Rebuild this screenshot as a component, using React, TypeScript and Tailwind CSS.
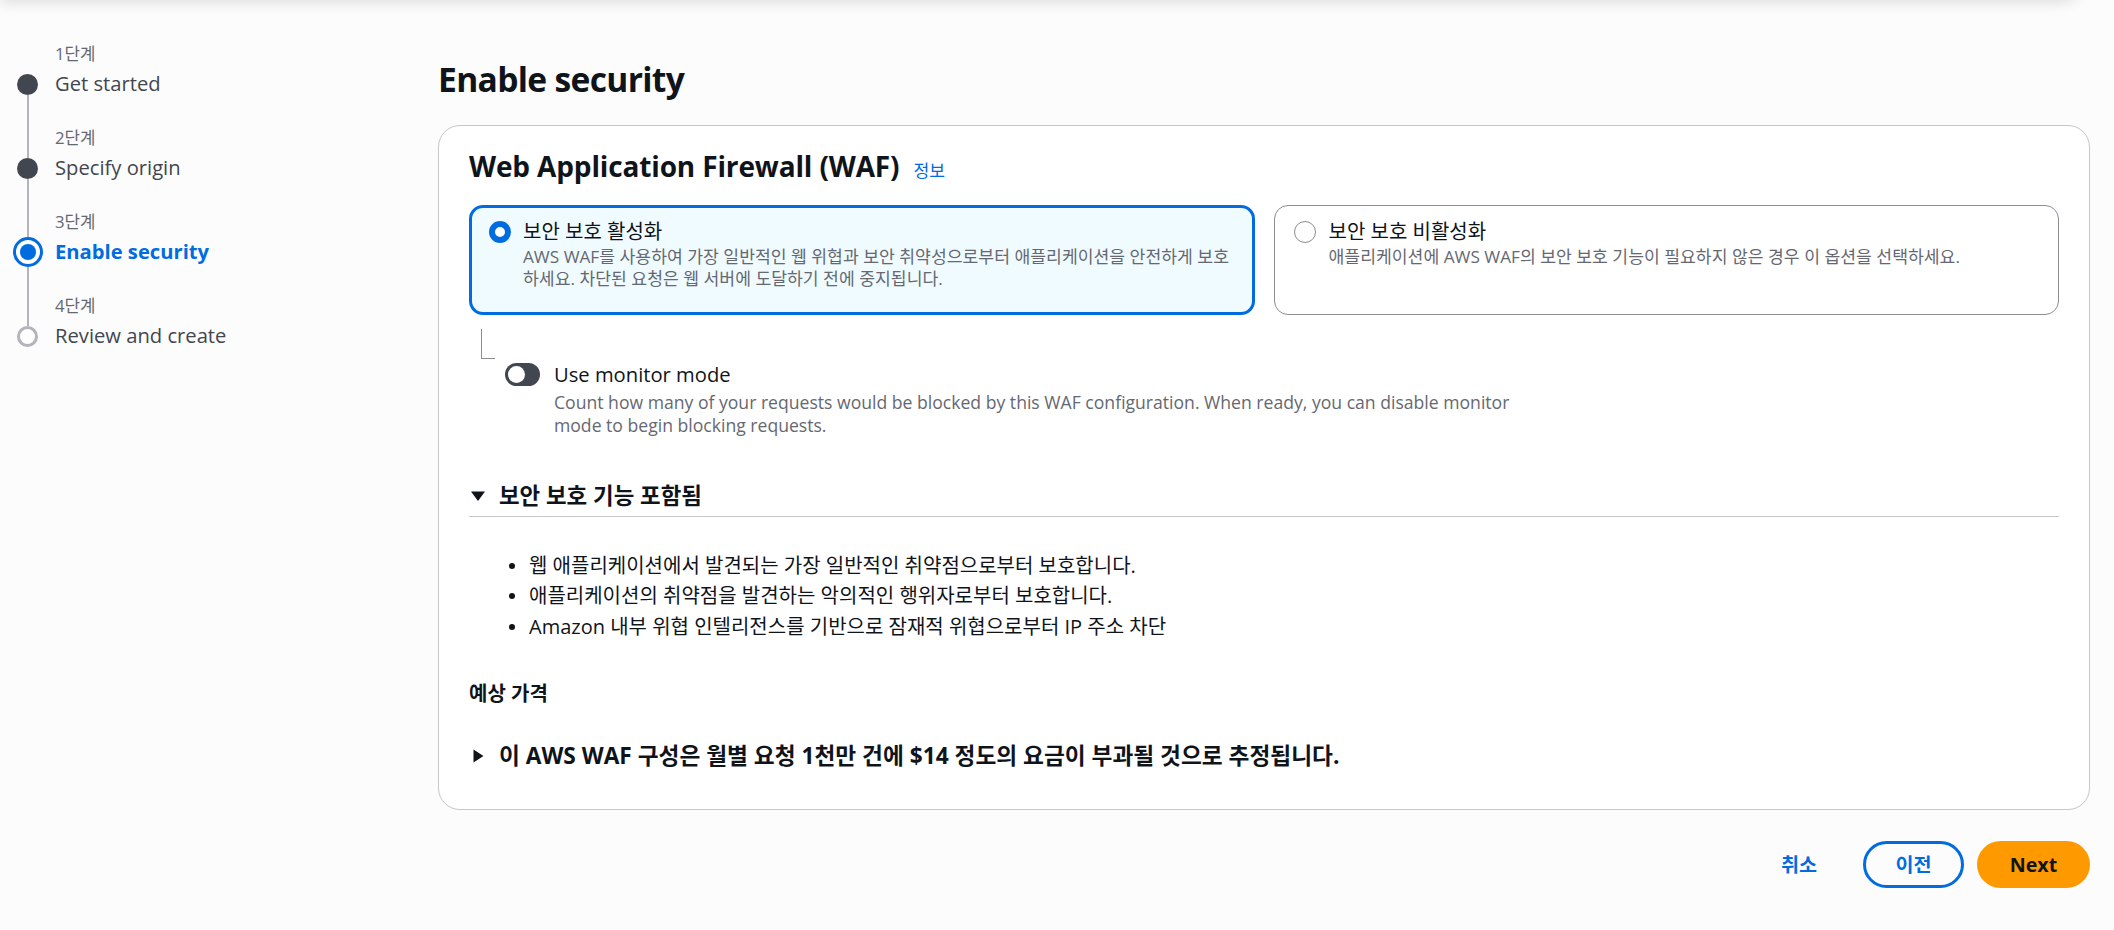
import React from "react";

type StepState = "done" | "active" | "todo";

interface Step {
  num: string;
  label: string;
  state: StepState;
}

const steps: Step[] = [
  { num: "1단계", label: "Get started", state: "done" },
  { num: "2단계", label: "Specify origin", state: "done" },
  { num: "3단계", label: "Enable security", state: "active" },
  { num: "4단계", label: "Review and create", state: "todo" },
];

const features = [
  "웹 애플리케이션에서 발견되는 가장 일반적인 취약점으로부터 보호합니다.",
  "애플리케이션의 취약점을 발견하는 악의적인 행위자로부터 보호합니다.",
  "Amazon 내부 위협 인텔리전스를 기반으로 잠재적 위협으로부터 IP 주소 차단",
];

const StepMarker = ({ state }: { state: StepState }) => {
  if (state === "active") {
    return (
      <div className="w-[30px] h-[30px] rounded-full border-[3px] border-[#006ce0] bg-white flex items-center justify-center shrink-0">
        <div className="w-[16px] h-[16px] rounded-full bg-[#006ce0]" />
      </div>
    );
  }
  if (state === "done") {
    return <div className="w-[21px] h-[21px] rounded-full bg-[#424650] shrink-0" />;
  }
  return (
    <div className="w-[21px] h-[21px] rounded-full border-[3px] border-[#b4b4bb] bg-white shrink-0" />
  );
};

const StepNav = () => (
  <nav className="w-[438px] shrink-0 pl-[12px] pt-[42px]">
    {steps.map((step, i) => (
      <div key={step.num} className="flex h-[84px]">
        <div className="w-[31px] flex flex-col items-center">
          <div
            className={
              step.state === "active"
                ? "w-[2px] h-[27px] bg-[#b4b4bb]"
                : i === 0
                  ? "w-[2px] h-[31.5px]"
                  : "w-[2px] h-[31.5px] bg-[#b4b4bb]"
            }
          />
          <StepMarker state={step.state} />
          <div
            className={
              i === steps.length - 1 ? "w-[2px] flex-1" : "w-[2px] flex-1 bg-[#b4b4bb]"
            }
          />
        </div>
        <div className="ml-[12px] pt-[1px]">
          <div className="text-[16.8px] leading-[22px] text-[#656871]">{step.num}</div>
          <div
            className={
              step.state === "active"
                ? "mt-[4px] text-[20.2px] leading-[28px] font-bold text-[#006ce0]"
                : "mt-[4px] text-[20.2px] leading-[28px] text-[#424650]"
            }
          >
            {step.label}
          </div>
        </div>
      </div>
    ))}
  </nav>
);

const CaretDown = () => (
  <svg width="16" height="16" viewBox="0 0 16 16" className="ml-[1px] shrink-0 text-[#0f141a]">
    <path d="M1 3.5h14L8 13z" fill="currentColor" />
  </svg>
);

const CaretRight = () => (
  <svg width="16" height="16" viewBox="0 0 16 16" className="ml-[1px] shrink-0 text-[#0f141a]">
    <path d="M3.5 1.5v13l10-6.5z" fill="currentColor" />
  </svg>
);

interface TileProps {
  selected: boolean;
  title: string;
  description: string;
}

const Tile = ({ selected, title, description }: TileProps) => (
  <div
    className={
      selected
        ? "rounded-[14px] border-[3px] border-[#006ce0] bg-[#f0fbff] px-[17px] pt-[10px] pb-[21px] flex gap-[12px]"
        : "rounded-[14px] border border-[#8c8c94] bg-white px-[19px] pt-[12px] pb-[20px] flex gap-[13px]"
    }
  >
    {selected ? (
      <div className="mt-[3px] w-[22px] h-[22px] rounded-full border-[6.5px] border-[#006ce0] bg-white shrink-0" />
    ) : (
      <div className="mt-[3px] w-[22px] h-[22px] rounded-full border-[1.5px] border-[#8c8c94] bg-white shrink-0" />
    )}
    <div className="flex-1">
      <div className="text-[20px] leading-[28px] text-[#0f141a]">{title}</div>
      <div className="text-[17.2px] leading-[22.4px] text-[#656871]">{description}</div>
    </div>
  </div>
);

const App = () => {
  return (
    <div className="relative min-h-[930px] overflow-hidden bg-[#fcfcfc] font-['Open_Sans','Noto_Sans_CJK_KR',sans-serif]">
      {/* header bar sitting just above the viewport, only its shadow shows */}
      <div className="absolute -top-[30px] left-0 w-[2086px] h-[30px] rounded-br-[28px] bg-white shadow-[0_3px_14px_rgba(0,7,22,0.12)]" />

      <div className="flex">
        <StepNav />

        <main className="flex-1 pr-[24px] pt-[58px] pb-[40px]">
          <h1 className="text-[33.6px] leading-[42px] font-bold tracking-[-0.02em] text-[#0f141a]">
            Enable security
          </h1>

          <section className="mt-[25px] rounded-[22px] border border-[#c6c6cd] bg-white px-[30px] pt-[24px] pb-[39px]">
            <div className="flex items-baseline gap-[14px]">
              <h2 className="text-[28px] leading-[33.6px] font-bold tracking-[-0.005em] text-[#0f141a]">
                Web Application Firewall (WAF)
              </h2>
              <span className="text-[17.2px] text-[#006ce0]">정보</span>
            </div>

            <div className="mt-[21px] grid grid-cols-2 gap-[19px]">
              <Tile
                selected
                title="보안 보호 활성화"
                description="AWS WAF를 사용하여 가장 일반적인 웹 위협과 보안 취약성으로부터 애플리케이션을 안전하게 보호하세요. 차단된 요청은 웹 서버에 도달하기 전에 중지됩니다."
              />
              <Tile
                selected={false}
                title="보안 보호 비활성화"
                description="애플리케이션에 AWS WAF의 보안 보호 기능이 필요하지 않은 경우 이 옵션을 선택하세요."
              />
            </div>

            <div className="mt-[14px] ml-[11.5px] w-[14px] h-[30px] border-l border-b border-[#8c8c94]" />
            <div className="mt-[1px] ml-[36px] flex gap-[14px]">
              <div className="mt-[3px] w-[35px] h-[23px] rounded-full bg-[#424650] flex items-center pl-[3px] shrink-0">
                <div className="w-[17px] h-[17px] rounded-full bg-white" />
              </div>
              <div>
                <div className="text-[20.2px] leading-[28px] text-[#0f141a]">Use monitor mode</div>
                <div className="mt-[3px] max-w-[985px] text-[17.6px] leading-[23px] text-[#656871]">
                  Count how many of your requests would be blocked by this WAF configuration. When ready, you can
                  disable monitor mode to begin blocking requests.
                </div>
              </div>
            </div>

            <div className="mt-[45px] pb-[6px] border-b border-[#c6c6cd] flex items-center gap-[13px]">
              <CaretDown />
              <span className="text-[22.4px] leading-[28px] font-bold text-[#0f141a]">보안 보호 기능 포함됨</span>
            </div>

            <ul className="mt-[34px]">
              {features.map((f) => (
                <li key={f} className="flex items-center text-[20px] leading-[30.5px] text-[#0f141a]">
                  <span className="ml-[40px] mr-[14px] w-[6px] h-[6px] rounded-full bg-[#0f141a] shrink-0" />
                  {f}
                </li>
              ))}
            </ul>

            <h3 className="mt-[39px] text-[20px] leading-[25.2px] font-bold text-[#0f141a]">예상 가격</h3>

            <div className="mt-[36px] flex items-center gap-[13px]">
              <CaretRight />
              <span className="text-[22.7px] leading-[28px] font-bold text-[#0f141a]">
                이 AWS WAF 구성은 월별 요청 1천만 건에 $14 정도의 요금이 부과될 것으로 추정됩니다.
              </span>
            </div>
          </section>

          <div className="mt-[31px] flex items-center justify-end">
            <button className="mr-[46px] text-[19.6px] leading-[28px] font-bold text-[#006ce0]">취소</button>
            <button className="mr-[13px] w-[101px] h-[47px] rounded-full border-[3px] border-[#006ce0] text-[19.6px] font-bold text-[#006ce0]">
              이전
            </button>
            <button className="w-[113px] h-[47px] rounded-full bg-[#ff9900] text-[19.6px] font-bold text-[#0f141a]">
              Next
            </button>
          </div>
        </main>
      </div>
    </div>
  );
};

export default App;
